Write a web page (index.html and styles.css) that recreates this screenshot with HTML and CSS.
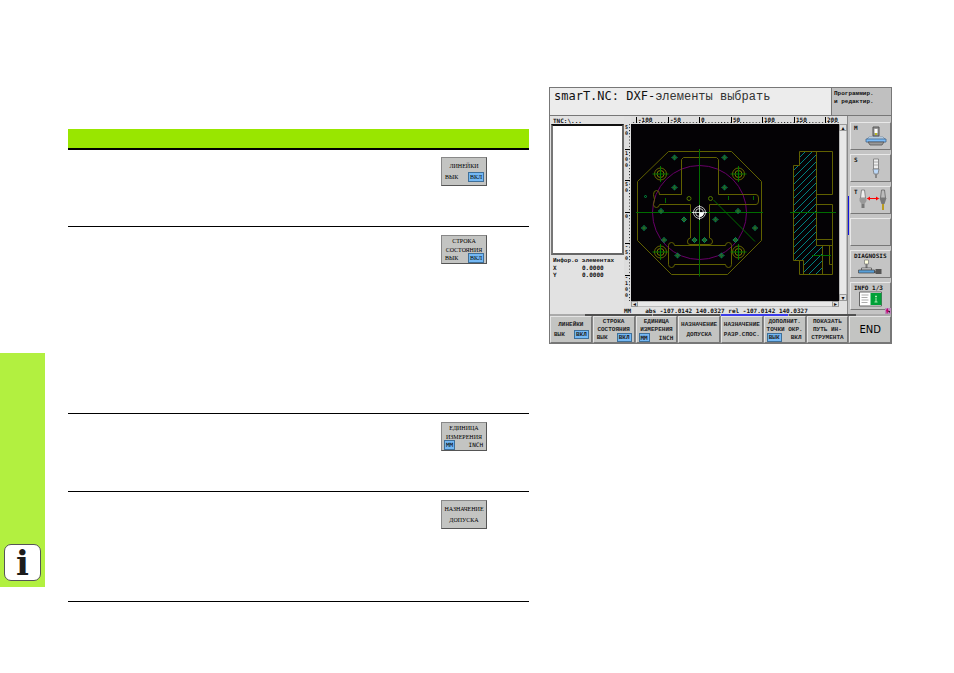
FILE: index.html
```html
<!DOCTYPE html>
<html lang="ru">
<head>
<meta charset="utf-8">
<title>smarT.NC: DXF</title>
<link rel="stylesheet" href="styles.css">
</head>
<body>
<div class="page">
  <aside class="tab"><span class="info">i</span></aside>

  <table class="functions">
    <thead><tr><th></th><th class="key-col"></th></tr></thead>
    <tbody>
      <tr class="row-s"><td></td><td><button class="key doc"><span>ЛИНЕЙКИ</span><span class="toggle"><span>ВЫК</span><span class="on">ВКЛ</span></span></button></td></tr>
      <tr class="row-l"><td></td><td><button class="key doc"><span>СТРОКА</span><span>СОСТОЯНИЯ</span><span class="toggle"><span>ВЫК</span><span class="on">ВКЛ</span></span></button></td></tr>
      <tr class="row-s"><td></td><td><button class="key doc"><span>ЕДИНИЦА</span><span>ИЗМЕРЕНИЯ</span><span class="toggle latin"><span class="on">MM</span><span>INCH</span></span></button></td></tr>
      <tr class="row-m"><td></td><td><button class="key doc"><span>НАЗНАЧЕНИЕ</span><span>ДОПУСКА</span></button></td></tr>
    </tbody>
  </table>

  <main class="screen">
    <header class="top">
      <h1>smarT.NC: DXF-<span class="cyr">элементы выбрать</span></h1>
      <div class="mode">Программир.<br>и редактир.</div>
    </header>

    <div class="body">
      <section class="left">
        <div class="path">TNC:\...</div>
        <div class="list"></div>
        <div class="details">
          <div>Инфор.о элементах</div>
          <dl><dt>X</dt><dd>0.0000</dd><dt>Y</dt><dd>0.0000</dd></dl>
        </div>
      </section>

      <section class="view">
        <svg class="ruler-h" viewBox="631 116 208 8">
          <defs><pattern id="th" x="636" y="0" width="3.15" height="8" patternUnits="userSpaceOnUse"><rect width="1" height="8" fill="#222"/></pattern></defs>
          <rect x="631" y="122" width="208" height="1" fill="url(#th)"/>
          <path d="M636.5 117v6M668.5 117v6M699.5 117v6M731.5 117v6M762.5 117v6M794.5 117v6M825.5 117v6" stroke="#000"/>
          <g class="ruler-text"><text x="638" y="122">-100</text><text x="670" y="122">-50</text><text x="701" y="122">0</text><text x="733" y="122">50</text><text x="764" y="122">100</text><text x="796" y="122">150</text><text x="827" y="122">200</text></g>
        </svg>
        <svg class="ruler-v" viewBox="624 124 7 177">
          <defs><pattern id="tv" x="0" y="149" width="8" height="3.15" patternUnits="userSpaceOnUse"><rect width="8" height="1" fill="#222"/></pattern></defs>
          <rect x="629" y="124" width="1" height="177" fill="url(#tv)"/>
          <path d="M625 149.500h5M625 180.500h5M625 212.500h5M625 243.500h5M625 275.500h5" stroke="#000"/>
          <g class="ruler-text stacked"><text y="129"><tspan x="625">5</tspan><tspan x="625" dy="6">0</tspan></text><text y="155"><tspan x="625">1</tspan><tspan x="625" dy="6">0</tspan><tspan x="625" dy="6">0</tspan></text><text y="186"><tspan x="625">5</tspan><tspan x="625" dy="6">0</tspan></text><text x="625" y="218">0</text><text y="248"><tspan x="625">-</tspan><tspan x="625" dy="6">5</tspan><tspan x="625" dy="6">0</tspan></text><text y="279"><tspan x="625">-</tspan><tspan x="625" dy="6">1</tspan><tspan x="625" dy="6">0</tspan><tspan x="625" dy="6">0</tspan></text></g>
        </svg>
        <svg class="drawing" viewBox="631 124 208 177">
          <defs>
            <g id="hole"><path d="M0 -2.500L2.500 0L0 2.500L-2.500 0Z" stroke="#08805c"/><circle r="1" stroke="#707000"/><path d="M-3 0H3M0 -3V3" stroke="#008040" stroke-width=".6"/></g>
            <g id="bore"><circle r="6" stroke="#686800"/><circle r="3.500" stroke="#787800"/><path d="M-8 0H8M0 -8V8" stroke="#007800"/></g>
            <clipPath id="section"><path d="M799.500 151.500H816.500V245.500H822.500V274.500H803.500V260.500H793.500V165.500H799.500Z"/></clipPath>
          </defs>
          <g fill="none" stroke-width="1">
            <circle cx="699.500" cy="212.500" r="47" stroke="#680068"/>
            <g stroke="#606000">
              <path d="M668.500 151.500H731.500L761.500 181.500V240.500L727.500 274.500H671.500L637.500 240.500V181.500Z"/>
              <path d="M681.500 194.500V159.500L683.500 157.500H716.500L718.500 159.500V194.500H756Q758.500 194.500 758.500 198V201Q758.500 204.500 756 204.500H709.500V238Q713 239 712.500 242Q712 245 709 244.500H690Q687 244.500 687.500 241Q688 238 690.500 238V204.500H659.500Q659 207.500 656.500 207.500Q653.500 207.500 653.500 204.500Q655.500 199.500 653.500 194.500Q653.500 190.500 656.500 190.500Q659.500 190.500 659.500 194.500Z"/>
              <path d="M674.500 245.500H725.500Q725.500 242.500 728.500 242.500Q731.500 242.500 731.500 245.500V264.500Q731.500 267.500 728.500 267.500Q725.500 267.500 725.500 264.500H674.500Q674.500 267.500 671.500 267.500Q668.500 267.500 668.500 264.500V245.500Q668.500 242.500 671.500 242.500Q674.500 242.500 674.500 245.500Z"/>
              <path d="M681.500 194.500H659.500"/>
            </g>
            <path d="M699.500 149V276.500M636 212.500H763M713.500 200L755 241.500M665.500 198V203M728.500 196V200M753.500 196V200" stroke="#006c00"/>
            <use href="#bore" x="660.500" y="174"/><use href="#bore" x="738.500" y="174"/><use href="#bore" x="660.500" y="252"/><use href="#bore" x="738.500" y="252"/>
            <use href="#hole" x="674.500" y="157.500"/><use href="#hole" x="724.500" y="157.500"/><use href="#hole" x="674.500" y="187.500"/><use href="#hole" x="724.500" y="187.500"/>
            <use href="#hole" x="661" y="211"/><use href="#hole" x="738" y="211"/><use href="#hole" x="684" y="219.500"/><use href="#hole" x="715.500" y="219.500"/>
            <use href="#hole" x="644" y="228"/><use href="#hole" x="755" y="228"/><use href="#hole" x="664" y="240"/><use href="#hole" x="735.500" y="240"/>
            <use href="#hole" x="694.500" y="240"/><use href="#hole" x="704.500" y="240"/><use href="#hole" x="677.500" y="255.500"/><use href="#hole" x="721.500" y="255.500"/>
            <g stroke="#507800"><circle cx="689" cy="198.500" r="2"/><circle cx="710.500" cy="198.500" r="2"/></g>
            <circle cx="645.500" cy="196.500" r="1" stroke="#009040"/>
            <g stroke="#eee" stroke-width=".8"><circle cx="699.500" cy="212.500" r="6"/><circle cx="699.500" cy="212.500" r="4"/><path d="M692 212.500H707M699.500 205V220"/></g>
            <path d="M699.500 212.500H704A4.500 4.500 0 0 1 699.500 217Z" fill="#fff"/>
            <path clip-path="url(#section)" stroke="#008080" d="M790 160l35-35M790 167l35-35M790 174l35-35M790 181l35-35M790 188l35-35M790 195l35-35M790 202l35-35M790 209l35-35M790 216l35-35M790 223l35-35M790 230l35-35M790 237l35-35M790 244l35-35M790 251l35-35M790 258l35-35M790 265l35-35M790 272l35-35M790 279l35-35M790 286l35-35M790 293l35-35M790 300l35-35M790 307l35-35"/>
            <g stroke="#606000"><path d="M799.500 151.500H832.500V194.500H816.500M816.500 151.500V245.500H832.500M816.500 204.500H832.500V274.500H799.500V260.500H793.500V165.500H799.500V151.500M799.500 260.500H803.500V274.500M822.500 245.500V274.500M816.500 239.500H832.500M829.500 245.500V264.500H832.500"/></g>
            <path d="M790 212.500H836M812 255.500H831" stroke="#006c00"/>
          </g>
        </svg>
        <div class="scroll-v"><i>▴</i><i>▾</i></div>
        <div class="scroll-h"><i>◂</i><i>▸</i></div>
        <div class="status"><span>MM</span><span>abs -107.0142 140.0327 rel -107.0142 140.0327</span></div>
      </section>

      <nav class="side">
        <button class="side-key"><span>M</span>
          <svg viewBox="0 0 22 20"><path d="M8 1h6v9h-6z" fill="#999" stroke="#555"/><path d="M9.500 3h3v4h-3z" fill="#fff"/><path d="M10 7h2v2h-2z" fill="#bb2"/><path d="M4 11h14l2 2H2z" fill="#def" stroke="#579" stroke-width=".6"/><path d="M1 13h20v3H1z" fill="#7bbcf8" stroke="#468" stroke-width=".8"/><path d="M3 16h16l-2 3H5z" fill="#999" stroke="#555" stroke-width=".8"/></svg></button>
        <button class="side-key"><span>S</span>
          <svg viewBox="0 0 22 20"><path d="M8.500 1h5v10h-5z" fill="#eee" stroke="#777" stroke-width=".8"/><path d="M9 4h4M9 7h4" stroke="#aaa"/><path d="M8 11h6l-1 5h-4z" fill="#bcd8f8" stroke="#777" stroke-width=".8"/><path d="M10 16h2v4h-2z" fill="#888"/></svg></button>
        <button class="side-key tool"><span>T</span>
          <svg viewBox="0 0 28 22"><path d="M3 1h3l1 8H2z" fill="#eee" stroke="#777" stroke-width=".8"/><path d="M1 9h7v3l-2 3H3L1 12z" fill="#999"/><path d="M3 15h3v4H3z" fill="#777"/><path d="M23 1h3l1 8h-5z" fill="#bbb" stroke="#666" stroke-width=".8"/><path d="M21 9h7l-2 6h-3z" fill="#777"/><path d="M23.500 15h2v6h-2z" fill="#bb9b20"/><path d="M9 9.500h11" stroke="#f00"/><path d="M8.500 9.500l3-2v4zM20.500 9.500l-3-2v4z" fill="#f00"/></svg></button>
        <button class="side-key" aria-label="—"></button>
        <button class="side-key wide"><span>DIAGNOSIS</span>
          <svg viewBox="0 0 26 16"><path d="M7 1h4v4H7z" fill="#ffd" stroke="#777" stroke-width=".7"/><path d="M8 5h2v4H8z" fill="#777"/><path d="M4 9h10v2H4z" fill="#eee" stroke="#444" stroke-width=".7"/><path d="M1 11h16v3H1z" fill="#589fd8" stroke="#444" stroke-width=".7"/><path d="M17 13h2" stroke="#222"/><path d="M18 10h6v5h-6z" fill="#555"/></svg></button>
        <button class="side-key wide"><span>INFO 1/3</span>
          <svg viewBox="0 0 24 16"><path d="M1 1h22v14H1z" fill="#fff" stroke="#666"/><path d="M3 4h7M3 6.500h6M3 9h7M3 11.500h6" stroke="#888" stroke-width=".7"/><path d="M12 2h11v12H12z" fill="#00a038"/><path d="M17 5h1v1h-1zM17.500 7v4M16 11h3" stroke="#cfc" stroke-width=".8"/></svg></button>
        <svg class="clip" viewBox="0 0 6 6"><rect width="6" height="6" fill="#b8b"/><path d="M1 2l2-2v2l2 2H3l-1 2z" fill="#c0006c"/><path d="M3 3h2v2z" fill="#222"/></svg>
      </nav>
    </div>

    <div class="levels"><i></i><i></i><i class="active"></i><i></i></div>
    <footer class="softkeys">
      <button class="key"><span>ЛИНЕЙКИ</span><span class="toggle"><span>ВЫК</span><span class="on">ВКЛ</span></span></button>
      <button class="key"><span>СТРОКА</span><span>СОСТОЯНИЯ</span><span class="toggle"><span>ВЫК</span><span class="on">ВКЛ</span></span></button>
      <button class="key"><span>ЕДИНИЦА</span><span>ИЗМЕРЕНИЯ</span><span class="toggle latin"><span class="on">MM</span><span>INCH</span></span></button>
      <button class="key"><span>НАЗНАЧЕНИЕ</span><span>ДОПУСКА</span></button>
      <button class="key"><span>НАЗНАЧЕНИЕ</span><span>РАЗР.СПОС.</span></button>
      <button class="key"><span>ДОПОЛНИТ.</span><span>ТОЧКИ ОКР.</span><span class="toggle"><span class="on">ВЫК</span><span>ВКЛ</span></span></button>
      <button class="key"><span>ПОКАЗАТЬ</span><span>ПУТЬ ИН-</span><span>СТРУМЕНТА</span></button>
      <button class="key end">END</button>
    </footer>
  </main>
</div>
</body>
</html>
```

FILE: styles.css
```css
* { box-sizing: border-box; }

body {
  margin: 0;
  background: #fff;
  color: #111;
  font-family: "DejaVu Sans Mono", monospace;
}

.page {
  display: grid;
  grid-template-columns: 45px minmax(0, 484fr) minmax(0, 363fr);
  align-items: start;
  padding-right: 62px;
}

.tab {
  display: flex;
  flex-direction: column;
  justify-content: flex-end;
  align-items: center;
  height: 234px;
  margin-top: 353px;
  padding-bottom: 6px;
  background: #b2f040;
}

.info {
  width: 37px;
  height: 37px;
  border: 1px solid #555;
  border-radius: 7px;
  background: #fff;
  color: #1c1c1c;
  font: bold 34px/36px "DejaVu Serif", serif;
  text-align: center;
}

.functions {
  justify-self: stretch;
  margin: 129px 0 0 23px;
  border-collapse: separate;
  border-spacing: 0;
  table-layout: fixed;
}
.functions th { height: 21px; padding: 0; background: #99e600; border-bottom: 2px solid #000; }
.functions .key-col { width: 88px; }
.functions td { padding: 8px 0 0; border-bottom: 1px solid #000; vertical-align: top; }
.row-s td { height: 78px; }
.row-m td { height: 110px; }
.row-l td { height: 187px; }
.functions tbody tr:first-child td { height: 77px; padding-top: 7px; }

.screen {
  margin: 87px 0 0 20px;
  border: 1px solid #777;
  background: #c4c4c4;
}

/* Keys */
button { margin: 0; padding: 0; font: inherit; color: inherit; }
.key {
  display: flex;
  flex-direction: column;
  justify-content: space-evenly;
  align-items: center;
  min-width: 0;
  height: 27px;
  border: 1px solid;
  border-color: #e4e4e4 #777 #777 #e4e4e4;
  background: #c3c4c2;
  color: #222;
  font: bold 6px/7px "Liberation Mono", monospace;
  white-space: nowrap;
}
.key.doc {
  width: 46px;
  height: 29px;
  border-color: #888 #555 #555 #888;
  color: #000;
  font: 6px/8px "Liberation Serif", serif;
}
.toggle {
  display: flex;
  justify-content: space-between;
  align-self: stretch;
  padding: 0 3px;
}
.toggle.latin { font-family: "DejaVu Sans Mono", monospace; }
.on { padding: 0 1px; background: #74b8f4; box-shadow: 0 0 0 1px #3f6f98; }
.key.end { font: 10px/14px "DejaVu Sans", sans-serif; color: #000; }

/* Title */
.top { display: grid; grid-template-columns: minmax(0, 1fr) 60px; height: 28px; border-bottom: 1px solid #777; }
h1 {
  margin: 0;
  padding: 0 0 0 4px;
  background: #ececec;
  font-size: 12px;
  font-weight: normal;
  line-height: 16px;
  white-space: nowrap;
}
.cyr { color: #333; font-family: "Liberation Mono", monospace; }
.mode {
  padding: 2px;
  border-left: 1px solid #777;
  background: #c0c0c0;
  font: bold 6px/8px "Liberation Mono", monospace;
}

/* Work area */
.body { display: grid; grid-template-columns: 74px minmax(0, 1fr) 44px; height: 198px; }
.left {
  display: flex;
  flex-direction: column;
  padding: 1px 0 1px 1px;
  background: #e2e2e2;
  font-size: 6px;
  line-height: 7px;
}
.path { padding-left: 2px; font-weight: bold; }
.list { height: 131px; border: 2px solid #555; border-color: #111 #666 #666 #777; background: #fff; }
.details { flex: 1; padding: 2px; font: bold 6px/7px "Liberation Mono", monospace; white-space: nowrap; }
dl { display: grid; grid-template-columns: 29px 1fr; margin: 0; font-family: "DejaVu Sans Mono", monospace; }
dd { margin: 0; }

.view {
  display: grid;
  grid-template-columns: 7px minmax(0, 1fr) 8px;
  grid-template-rows: 8px 177px 6px 7px;
  background: #e0e0e0;
}
.view svg { display: block; width: 100%; height: 100%; }
.ruler-h { grid-column: 2; grid-row: 1; background: #ddd; }
.ruler-v { grid-column: 1; grid-row: 2; background: #ddd; }
.ruler-text { font: bold 6px "DejaVu Sans Mono", monospace; fill: #111; }
.ruler-text.stacked { font-size: 5px; }
.drawing { grid-column: 2; grid-row: 2; background: #040205; }
.scroll-v, .scroll-h {
  display: flex;
  justify-content: space-between;
  border: 1px solid #bbb;
  background: #e8e8e8;
  font: 6px/5px "DejaVu Sans", sans-serif;
}
.scroll-v { grid-column: 3; grid-row: 2; flex-direction: column; text-align: center; }
.scroll-h { grid-column: 2; grid-row: 3; }
.scroll-v i, .scroll-h i { background: #ddd; outline: 1px solid #999; font-style: normal; }
.scroll-h i { width: 5px; text-align: center; line-height: 4px; }
.status {
  grid-column: 1 / -1;
  grid-row: 4;
  display: flex;
  gap: 14px;
  font-size: 6px;
  font-weight: bold;
  line-height: 7px;
  white-space: nowrap;
}

.side {
  position: relative;
  display: flex;
  flex-direction: column;
  gap: 4px;
  padding: 6px 0 0 2px;
  border-left: 1px solid #888;
}
.side::before {
  content: "";
  position: absolute;
  left: 0;
  top: 80px;
  width: 1px;
  height: 39px;
  background: #1010e0;
}
.side-key {
  display: flex;
  align-items: center;
  height: 28px;
  padding: 1px 3px;
  border: 1px solid;
  border-color: #e8e8e8 #777 #777 #e8e8e8;
  background: #c4c4c4;
  font-size: 6px;
  font-weight: bold;
  line-height: 7px;
}
.side-key span { align-self: flex-start; }
.side-key svg { width: 22px; height: 20px; margin-left: auto; }
.side-key.tool svg { width: 29px; height: 22px; }
.side-key.wide { flex-direction: column; }
.side-key.wide svg { width: 27px; height: 16px; margin: 0 auto; }
.clip { position: absolute; right: 0; bottom: 0; width: 6px; height: 6px; }

.levels { display: flex; height: 2px; padding: 0 35px; gap: 1px; background: #aaa; }
.levels i { flex: 1; background: #505050; }
.levels .active { background: #3c3ce8; }

.softkeys { display: grid; grid-template-columns: repeat(8, minmax(0, 1fr)); gap: 1px; background: #888; }
```
